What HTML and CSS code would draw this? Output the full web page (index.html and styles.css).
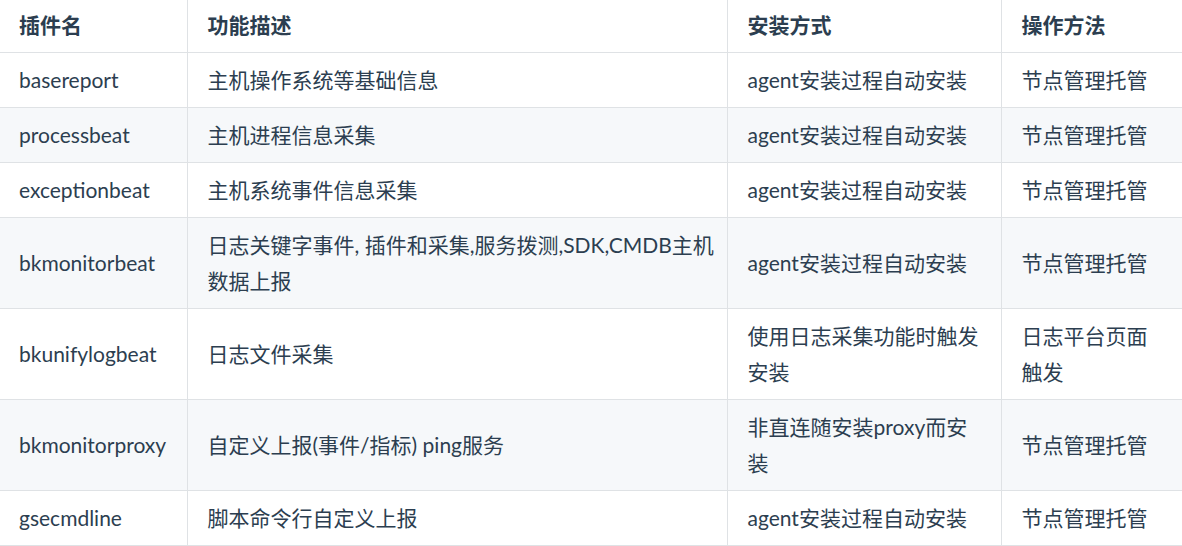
FILE: index.html
```html
<!DOCTYPE html>
<html lang="zh-CN">
<head>
<meta charset="utf-8">
<title>插件列表</title>
<link rel="stylesheet" href="styles.css">
</head>
<body>
<table class="plugins">
  <colgroup>
    <col class="c1"><col class="c2"><col class="c3"><col class="c4">
  </colgroup>
  <thead>
    <tr><th>插件名</th><th>功能描述</th><th>安装方式</th><th>操作方法</th></tr>
  </thead>
  <tbody>
    <tr><td>basereport</td><td>主机操作系统等基础信息</td><td>agent安装过程自动安装</td><td>节点管理托管</td></tr>
    <tr><td>processbeat</td><td>主机进程信息采集</td><td>agent安装过程自动安装</td><td>节点管理托管</td></tr>
    <tr><td>exceptionbeat</td><td>主机系统事件信息采集</td><td>agent安装过程自动安装</td><td>节点管理托管</td></tr>
    <tr><td>bkmonitorbeat</td><td class="desc">日志关键字事件, 插件和采集,服务拨测,SDK,CMDB主机数据上报</td><td>agent安装过程自动安装</td><td>节点管理托管</td></tr>
    <tr><td>bkunifylogbeat</td><td>日志文件采集</td><td>使用日志采集功能时触发安装</td><td>日志平台页面触发</td></tr>
    <tr><td>bkmonitorproxy</td><td>自定义上报(事件/指标) ping服务</td><td>非直连随安装proxy而安装</td><td>节点管理托管</td></tr>
    <tr><td>gsecmdline</td><td>脚本命令行自定义上报</td><td>agent安装过程自动安装</td><td>节点管理托管</td></tr>
  </tbody>
</table>
</body>
</html>
```
FILE: styles.css
```css
html, body {
  margin: 0;
  padding: 0;
  background: #ffffff;
}
body {
  font-family: "Lato", "Noto Sans CJK SC", sans-serif;
  font-size: 21px;
  line-height: 36px;
  color: #2c3e50;
  overflow: hidden;
}
.plugins {
  border-collapse: collapse;
  table-layout: fixed;
  width: 1182px;
}
.c1 { width: 187px; }
.c2 { width: 540px; }
.c3 { width: 274px; }
.c4 { width: 181px; }
.plugins th,
.plugins td {
  border-left: 1px solid #dfe2e5;
  border-bottom: 1px solid #dfe2e5;
  padding: 9px 20px 9px 20px;
  text-align: left;
  vertical-align: middle;
  word-break: break-all;
}
.plugins th:first-child,
.plugins td:first-child {
  border-left: none;
  padding-left: 19px;
}
.plugins .desc {
  padding-right: 8px;
}
.plugins th {
  font-weight: 700;
  padding-top: 7px;
  padding-bottom: 9px;
}
.plugins tbody tr:nth-child(2n) {
  background: #f6f8fa;
}
```
